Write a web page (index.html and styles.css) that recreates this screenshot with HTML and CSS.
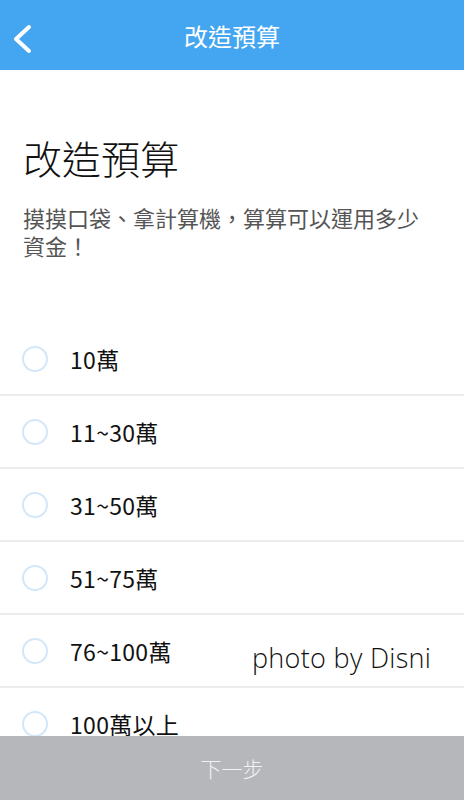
FILE: index.html
```html
<!DOCTYPE html>
<html lang="zh-Hant">
<head>
  <meta charset="UTF-8">
  <title>改造預算</title>
  <link rel="stylesheet" href="styles.css">
</head>
<body>
  <header class="top-bar">
    <a class="back" href="#">
      <svg width="24" height="32" viewBox="0 0 24 32">
        <path d="M19 4 L6 16 L19 28" fill="none" stroke="#fff" stroke-width="4" stroke-linecap="round" stroke-linejoin="round"/>
      </svg>
    </a>
    <span class="top-title">改造預算</span>
  </header>

  <main class="content">
    <h1>改造預算</h1>
    <p class="intro">摸摸口袋、拿計算機，算算可以運用多少資金！</p>
  </main>

  <ul class="options">
    <li><span class="radio"></span>10萬</li>
    <li><span class="radio"></span>11~30萬</li>
    <li><span class="radio"></span>31~50萬</li>
    <li><span class="radio"></span>51~75萬</li>
    <li><span class="radio"></span>76~100萬</li>
    <li><span class="radio"></span>100萬以上</li>
  </ul>

  <div class="watermark">photo by Disni</div>

  <button class="next">下一步</button>
</body>
</html>
```

FILE: styles.css
```css
body {
  margin: 0;
  font-family: "Noto Sans CJK TC", "Noto Sans", sans-serif;
  background: #fff;
  color: #111;
  height: 800px;
  overflow: hidden;
}

.top-bar {
  height: 70px;
  background: #44a6f1;
  display: flex;
  align-items: center;
  justify-content: center;
  position: relative;
}

.back {
  position: absolute;
  left: 10px;
  top: 23px;
  display: block;
}

.top-title {
  color: #fff;
  font-size: 24px;
  font-weight: 400;
}

.content {
  padding: 0 40px 0 23px;
}

h1 {
  margin: 63px 0 0;
  font-size: 39px;
  font-weight: 300;
  line-height: 48px;
  color: #111;
}

.intro {
  margin: 22px 0 0;
  font-size: 22px;
  line-height: 28px;
  color: #555;
}

.options {
  list-style: none;
  margin: 64px 0 0;
  padding: 0;
}

.options li {
  height: 71px;
  display: flex;
  align-items: center;
  font-size: 23px;
  letter-spacing: 0.3px;
  color: #111;
  border-bottom: 2px solid #ececec;
}

.radio {
  width: 22px;
  height: 22px;
  border: 2px solid #d2e7f9;
  border-radius: 50%;
  margin: 0 22px 0 22px;
}

.watermark {
  position: absolute;
  left: 252px;
  top: 639px;
  font-family: "Open Sans", sans-serif;
  font-weight: 300;
  font-size: 27px;
  letter-spacing: 0.3px;
  color: #111;
  text-shadow: 1px 1px 0 #fff, -1px -1px 0 #fff;
}

.next {
  position: fixed;
  left: 0;
  bottom: 0;
  width: 100%;
  height: 64px;
  border: none;
  background: #b6b7bb;
  color: #f2f2f2;
  font-family: "Noto Sans CJK TC", sans-serif;
  font-size: 21px;
  font-weight: 300;
}
```
